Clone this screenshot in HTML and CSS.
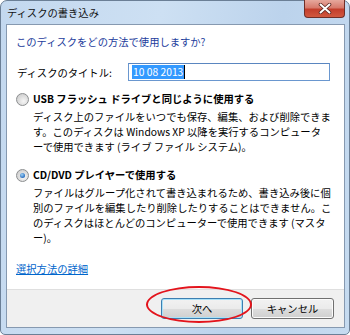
FILE: index.html
```html
<!DOCTYPE html>
<html lang="ja">
<head>
    <meta charset="UTF-8">
    <title>ディスクの書き込み</title>
    <link rel="stylesheet" href="styles.css">
</head>
<body>
    <div class="window">
        <div class="titlebar">
            <span class="title">ディスクの書き込み</span>
            <div class="close">
                <svg width="14" height="11" viewBox="0 0 14 11">
                    <path d="M2.5 1.5 L11.5 9.5 M11.5 1.5 L2.5 9.5" stroke="#5a2620" stroke-width="3.6" stroke-linecap="round"/>
                    <path d="M2.5 1.5 L11.5 9.5 M11.5 1.5 L2.5 9.5" stroke="#ffffff" stroke-width="2" stroke-linecap="round"/>
                </svg>
            </div>
        </div>
        <div class="client">
            <div class="content">
                <p class="instruction">このディスクをどの方法で使用しますか?</p>
                <div class="field">
                    <span class="label">ディスクのタイトル:</span>
                    <div class="textbox"><span class="selected">10 08 2013</span><span class="caret"></span></div>
                </div>
                <div class="option">
                    <span class="radio"></span>
                    <div class="option-body">
                        <div class="option-title">USB フラッシュ ドライブと同じように使用する</div>
                        <div class="option-desc">ディスク上のファイルをいつでも保存、編集、および削除できま<br>す。このディスクは Windows XP 以降を実行するコンピュータ<br>ーで使用できます (ライブ ファイル システム)。</div>
                    </div>
                </div>
                <div class="option second">
                    <span class="radio on"></span>
                    <div class="option-body">
                        <div class="option-title">CD/DVD プレイヤーで使用する</div>
                        <div class="option-desc">ファイルはグループ化されて書き込まれるため、書き込み後に個<br>別のファイルを編集したり削除したりすることはできません。こ<br>のディスクはほとんどのコンピューターで使用できます (マスタ<br>ー)。</div>
                    </div>
                </div>
                <a class="link" href="#">選択方法の詳細</a>
            </div>
            <div class="footer">
                <div class="btn-wrap">
                    <button class="btn default">次へ</button>
                    <span class="circle"></span>
                </div>
                <button class="btn">キャンセル</button>
            </div>
        </div>
    </div>
</body>
</html>
```
FILE: styles.css
```css
body {
    margin: 0;
    font-family: "Noto Sans CJK JP", "Noto Sans", sans-serif;
    font-size: 10.3px;
    color: #000;
    background: #fff;
}
.window {
    width: 350px;
    height: 335px;
    box-sizing: border-box;
    border: 1px solid #6b7f96;
    border-radius: 7px 7px 5px 5px;
    background: linear-gradient(100deg, #c3d8ef 0%, #cde0f3 40%, #bcd3ec 70%, #c6dbf0 100%);
    padding: 0 4px 6px 5px;
    display: flex;
    flex-direction: column;
}
.titlebar {
    height: 23px;
    display: flex;
    justify-content: space-between;
    align-items: flex-start;
}
.title {
    line-height: 23px;
    padding-left: 1px;
    color: #111;
}
.close {
    width: 41px;
    height: 18px;
    margin-top: -1px;
    box-sizing: border-box;
    border: 1px solid #6f2e27;
    border-top: none;
    border-radius: 0 0 4px 4px;
    background: linear-gradient(#e6a89d 0%, #d77a6c 45%, #c33e2c 55%, #d1583f 100%);
    display: flex;
    align-items: center;
    justify-content: center;
}
.client {
    flex: 1;
    border: 1px solid #8699b0;
    background: #fff;
    display: flex;
    flex-direction: column;
}
.content {
    flex: 1;
    padding: 9px 0 0 9px;
}
.instruction {
    margin: 0;
    line-height: 15px;
    color: #1c3c9c;
}
.field {
    display: flex;
    align-items: center;
    margin-top: 14px;
}
.label {
    width: 111px;
    padding-left: 1px;
}
.textbox {
    width: 202px;
    height: 18px;
    box-sizing: border-box;
    border: 1px solid #6a97cf;
    border-top-color: #5a86c0;
    display: flex;
    align-items: center;
    padding-left: 3px;
}
.selected {
    background: #3399ff;
    color: #fff;
    line-height: 14px;
    padding: 0 1px;
}
.caret {
    width: 1px;
    height: 14px;
    background: #000;
}
.option {
    display: flex;
    margin-top: 10px;
}
.option.second {
    margin-top: 13px;
}
.radio {
    width: 11px;
    height: 11px;
    margin: 2px 4px 0 0;
    border: 1px solid #8c8e90;
    border-radius: 50%;
    background: radial-gradient(circle at 60% 65%, #f6f6f6 0%, #d8d8d8 60%, #c8c8c8 100%);
    position: relative;
    flex-shrink: 0;
}
.radio.on::after {
    content: "";
    position: absolute;
    left: 3px;
    top: 3px;
    width: 5px;
    height: 5px;
    border-radius: 50%;
    background: radial-gradient(circle at 40% 35%, #9fd3f7, #2a6ebf 70%, #1b4f95);
}
.option-title {
    font-weight: bold;
    line-height: 15px;
}
.option-desc {
    margin-top: 3px;
    line-height: 15px;
    white-space: nowrap;
}
.link {
    display: inline-block;
    margin-top: 16px;
    line-height: 15px;
    color: #0066cc;
}
.footer {
    height: 37px;
    border-top: 1px solid #dfdfdf;
    background: #f0f0f0;
    display: flex;
    justify-content: flex-end;
    align-items: center;
    gap: 8px;
    padding-right: 10px;
}
.btn-wrap {
    position: relative;
    display: flex;
}
.btn {
    width: 83px;
    height: 21px;
    padding: 0;
    font-family: inherit;
    font-size: 10.3px;
    color: #000;
    border: 1px solid #707070;
    border-radius: 3px;
    background: linear-gradient(#f2f2f2 0%, #ebebeb 50%, #dddddd 51%, #cfcfcf 100%);
    box-shadow: inset 0 0 0 1px #fbfbfb;
}
.btn.default {
    width: 82px;
    border-color: #3c7fb1;
    box-shadow: inset 0 0 0 1px #a9e1f8;
}
.circle {
    position: absolute;
    left: -15px;
    top: -12px;
    width: 106px;
    height: 37px;
    box-sizing: border-box;
    border: 2px solid #e3141c;
    border-radius: 50%;
}
```
